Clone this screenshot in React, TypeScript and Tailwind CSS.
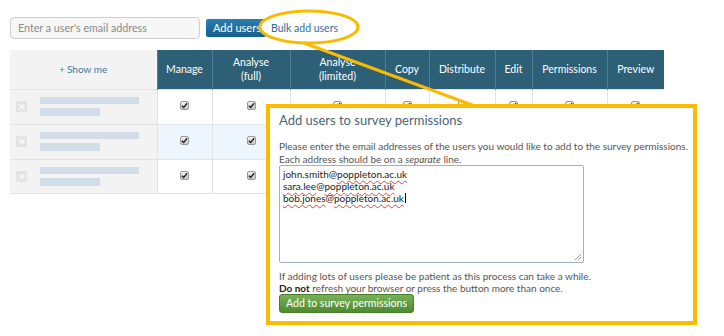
import React from "react";

const cols = [
  { w: 55, label: ["Manage"] },
  { w: 78, label: ["Analyse", "(full)"] },
  { w: 95, label: ["Analyse", "(limited)"] },
  { w: 44, label: ["Copy"] },
  { w: 66, label: ["Distribute"] },
  { w: 37, label: ["Edit"] },
  { w: 75, label: ["Permissions"] },
  { w: 57, label: ["Preview"] },
];

function Check() {
  return (
    <span className="inline-flex h-[9px] w-[9px] items-center justify-center rounded-[2px] border border-[#9a9a9a] bg-gradient-to-b from-[#f2f2f2] to-[#c8c8c8]">
      <svg width="7" height="7" viewBox="0 0 8 8">
        <path d="M1 4.2 L3.1 6.3 L7 1.5" fill="none" stroke="#222" strokeWidth="1.6" />
      </svg>
    </span>
  );
}

function Squig({ children }: { children: React.ReactNode }) {
  return (
    <span className="underline decoration-wavy decoration-[#e0453a] decoration-1 underline-offset-2">
      {children}
    </span>
  );
}

export default function App() {
  return (
    <div
      className="relative h-[336px] w-[724px] overflow-hidden bg-white"
      style={{ fontFamily: "Lato, 'Open Sans', sans-serif" }}
    >
      <div className="pl-[10px] pt-[17px]">
        {/* top row */}
        <div className="flex items-center">
          <div className="flex h-[22px] w-[190px] items-center rounded-[4px] border border-[#cfcfcf] bg-[#f7f7f7] pl-[7px] text-[10.7px] text-[#8a8a8a]">
            Enter a user's email address
          </div>
          <div className="ml-[6px] flex h-[18px] w-[60px] items-center rounded-[2px] bg-gradient-to-b from-[#2a7fb0] to-[#175f8c] pl-[7px] text-[11px] text-white">
            Add users
          </div>
          <div className="relative ml-[5px] text-[10.5px] leading-[14px] text-[#2f6d99]">
            <svg
              className="absolute left-[-13px] top-[-12px]"
              width="102"
              height="36"
              viewBox="0 0 102 36"
            >
              <ellipse cx="51" cy="18" rx="49" ry="16" fill="white" stroke="#f9bb00" strokeWidth="3" />
            </svg>
            <span className="relative">Bulk add users</span>
          </div>
        </div>

        {/* table */}
        <table className="mt-[11px] border-collapse text-[10.5px]" style={{ tableLayout: "fixed" }}>
          <colgroup>
            <col style={{ width: 147 }} />
            {cols.map((c, i) => (
              <col key={i} style={{ width: c.w }} />
            ))}
          </colgroup>
          <thead>
            <tr className="h-[39px]">
              <th className="bg-[#f3f3f3] text-center text-[10px] font-normal text-[#3b7aa3]">
                <span className="text-[9px]">+</span> Show me
              </th>
              {cols.map((c, i) => (
                <th
                  key={i}
                  className="border-l border-[#4f7d93] bg-[#2d5f77] text-center font-normal leading-[14px] text-white"
                >
                  {c.label.map((l, j) => (
                    <div key={j}>{l}</div>
                  ))}
                </th>
              ))}
            </tr>
          </thead>
          <tbody>
            {[0, 1, 2].map((r) => (
              <tr key={r} className={r === 2 ? "h-[34px]" : "h-[35px]"}>
                <td className="border-t border-[#e4e4e4] bg-[#f3f3f3]">
                  <div className="flex items-center">
                    <div className="ml-[6px] flex h-[11px] w-[11px] items-center justify-center bg-[#e4e4e4] text-[9px] leading-none text-white">
                      ✕
                    </div>
                    <div className="ml-[13px] flex flex-col gap-[4px]">
                      <div className="h-[7px] w-[99px] bg-[#d3dde9]" />
                      <div className="h-[8px] w-[60px] bg-[#d3dde9]" />
                    </div>
                  </div>
                </td>
                {cols.map((c, i) => (
                  <td
                    key={i}
                    className={`border-l border-t border-[#e4e4e4] text-center align-middle ${
                      r === 1 ? "bg-[#eef6fd]" : "bg-white"
                    }`}
                  >
                    <div className="flex items-center justify-center pb-[2px]">
                      <Check />
                    </div>
                  </td>
                ))}
              </tr>
            ))}
            <tr className="h-px">
              <td colSpan={9} className="border-t border-[#e4e4e4]" />
            </tr>
          </tbody>
        </table>
      </div>

      {/* connector line */}
      <svg className="absolute left-0 top-0" width="724" height="336">
        <line x1="304" y1="43" x2="483" y2="109" stroke="#f9bb00" strokeWidth="3" />
      </svg>

      {/* popup */}
      <div className="absolute left-[266px] top-[104px] h-[221px] w-[431px] border-[4px] border-[#fbbc00] bg-white pl-[9px] pt-[4px]">
        <div className="text-[13px] leading-[16px] text-[#4b6579]">Add users to survey permissions</div>
        <div className="mt-[12px] text-[10px] leading-[12.5px] text-[#555]">
          Please enter the email addresses of the users you would like to add to the survey permissions.
          <br />
          Each address should be on a <i>separate</i> line.
        </div>
        <div className="relative h-[98px] w-[305px] rounded-[2px] border border-[#9fb1c1] pl-[3px] pt-[3px] text-[10px] leading-[11.5px] text-[#222]">
          <div>
            john.smith@<Squig>poppleton.ac.uk</Squig>
          </div>
          <div>
            <Squig>sara.lee</Squig>@<Squig>poppleton.ac.uk</Squig>
          </div>
          <div>
            <Squig>bob.jones</Squig>@<Squig>poppleton.ac.uk</Squig>
            <span className="ml-px inline-block h-[10px] w-px translate-y-[1px] bg-black" />
          </div>
          <svg className="absolute bottom-[1px] right-[1px]" width="8" height="8" viewBox="0 0 8 8">
            <path d="M7 1 L1 7 M7 4 L4 7" stroke="#999" strokeWidth="1" />
          </svg>
        </div>
        <div className="mt-[7px] text-[10px] leading-[12px] text-[#555]">
          If adding lots of users please be patient as this process can take a while.
          <br />
          <b className="text-[#222]">Do not</b> refresh your browser or press the button more than once.
        </div>
        <div className="flex h-[19px] w-[135px] items-center justify-center rounded-[3px] border border-[#4a7f2a] bg-gradient-to-b from-[#78b15a] to-[#4e8a2f] text-[10.5px] text-white">
          Add to survey permissions
        </div>
      </div>
    </div>
  );
}
